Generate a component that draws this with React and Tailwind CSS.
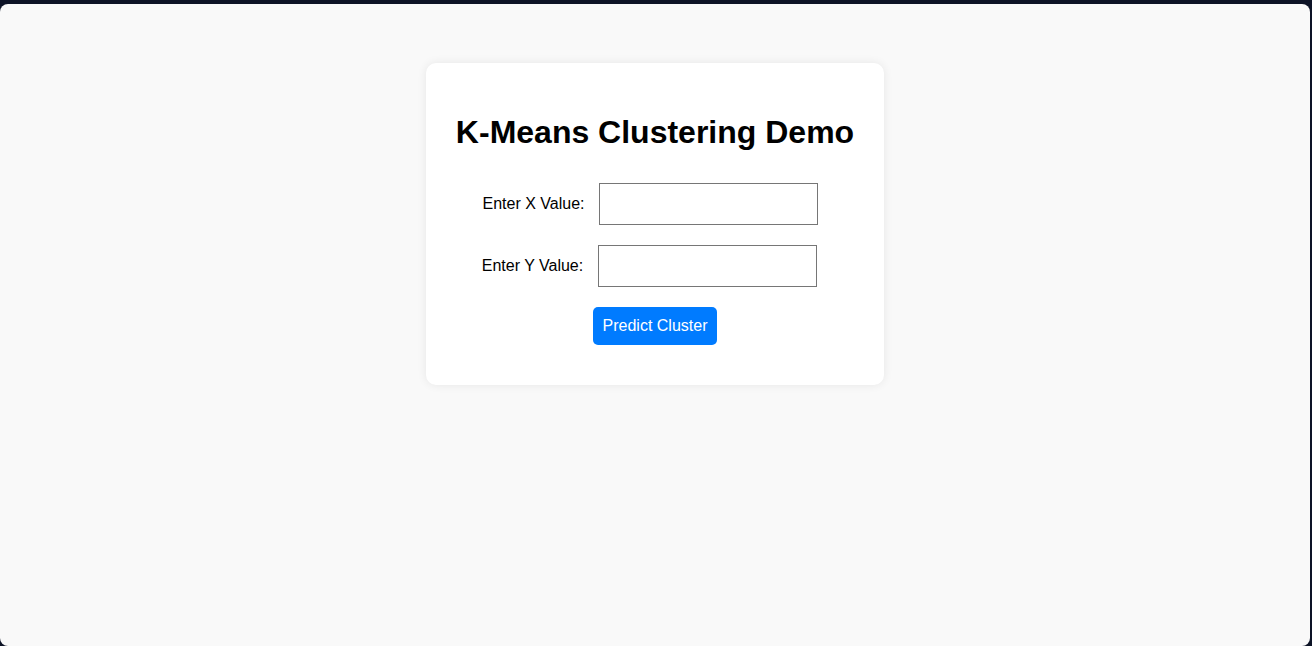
import React from 'react'

const Field = ({ label, shift }) => (
    <div className={`flex items-center justify-center ${shift}`}>
        <label className="text-[16px] text-black mr-[15px]">{label}</label>
        <input
            type="text"
            className="w-[219px] h-[42px] border border-[#767676] bg-white px-2 text-[16px] outline-none"
        />
    </div>
)

const App = () => {
    return (
        <div className="h-screen bg-[#0d1326] pt-[4px] pr-[2px]" style={{ fontFamily: '"Liberation Sans", Arial, sans-serif' }}>
            <div className="h-[642px] rounded-[8px] bg-[#f9f9f9] pt-[59px] flex justify-center items-start">
                <div className="w-[458px] bg-white rounded-[10px] shadow-[0_0_10px_rgba(0,0,0,0.08)] pt-[51px] pb-[40px] flex flex-col items-center">
                    <h1 className="text-[32px] leading-[37px] font-bold text-black">K-Means Clustering Demo</h1>

                    <div className="mt-[32px] flex flex-col gap-[20px] w-full">
                        <Field label="Enter X Value:" shift="pr-[9px]" />
                        <Field label="Enter Y Value:" shift="pr-[11px]" />
                    </div>

                    <button className="mt-[20px] w-[124px] h-[38px] bg-[#007bff] text-white text-[16px] rounded-[5px]">
                        Predict Cluster
                    </button>
                </div>
            </div>
        </div>
    )
}

export default App
